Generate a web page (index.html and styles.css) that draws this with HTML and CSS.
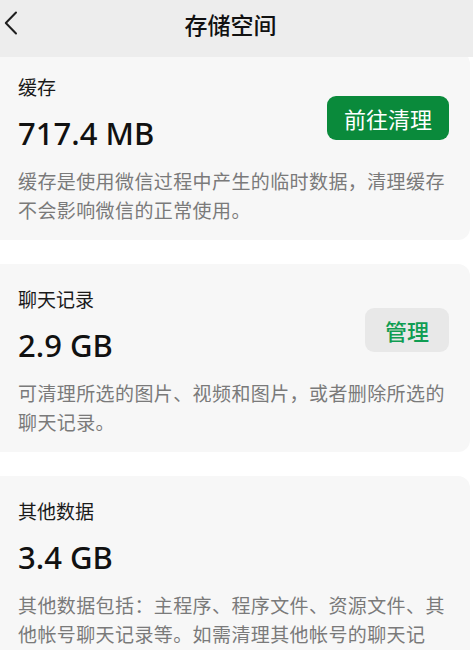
FILE: index.html
```html
<!DOCTYPE html>
<html lang="zh-CN">
<head>
    <meta charset="UTF-8">
    <meta name="viewport" content="width=device-width, initial-scale=1.0">
    <title>存储空间</title>
    <link rel="stylesheet" href="styles.css">
</head>
<body>
    <!-- Top Bar -->
    <div class="topbar">
        <a href="#" class="back" aria-label="返回">
            <svg width="14" height="24" viewBox="0 0 14 24">
                <polyline points="12,1.5 1.8,12 12,22.5" fill="none" stroke="#1f1f1f" stroke-width="2" stroke-linecap="round" stroke-linejoin="round"/>
            </svg>
        </a>
        <h1>存储空间</h1>
    </div>

    <div class="content">
        <!-- Cache -->
        <div class="card">
            <div class="card-top">
                <div class="info">
                    <div class="label">缓存</div>
                    <div class="amount">717.4 MB</div>
                </div>
                <button class="btn primary">前往清理</button>
            </div>
            <p class="desc">缓存是使用微信过程中产生的临时数据，清理缓存不会影响微信的正常使用。</p>
        </div>

        <!-- Chat history -->
        <div class="card">
            <div class="card-top">
                <div class="info">
                    <div class="label">聊天记录</div>
                    <div class="amount">2.9 GB</div>
                </div>
                <button class="btn light">管理</button>
            </div>
            <p class="desc">可清理所选的图片、视频和图片，或者删除所选的聊天记录。</p>
        </div>

        <!-- Other data -->
        <div class="card">
            <div class="card-top">
                <div class="info">
                    <div class="label">其他数据</div>
                    <div class="amount">3.4 GB</div>
                </div>
            </div>
            <p class="desc">其他数据包括：主程序、程序文件、资源文件、其他帐号聊天记录等。如需清理其他帐号的聊天记录，需登录该帐号后进行清理。</p>
        </div>
    </div>
</body>
</html>
```

FILE: styles.css
```css
/* General Styling */
body {
    margin: 0;
    padding: 0;
    font-family: "Noto Sans", "Noto Sans CJK SC", sans-serif;
    background: #ffffff;
    color: #111;
    overflow-x: hidden;
}

.topbar {
    position: relative;
    z-index: 2;
    height: 57px;
    background: #ededed;
    display: flex;
    align-items: center;
    justify-content: center;
}

.topbar h1 {
    margin: 0 12px 10px 0;
    font-size: 23px;
    font-weight: 500;
    color: #111;
}

.back {
    position: absolute;
    left: 4px;
    top: 11px;
    display: flex;
}

.content {
    display: flex;
    flex-direction: column;
    gap: 24px;
    margin-top: -5px;
}

.card {
    background: #f7f7f7;
    margin: 0 3px 0 -12px;
    padding: 23px 21px 14px 30px;
    border-radius: 12px;
}

.card-top {
    display: flex;
    align-items: center;
    justify-content: space-between;
}

.label {
    font-size: 19px;
    line-height: 26px;
    color: #1a1a1a;
}

.amount {
    margin-top: 12px;
    font-size: 31px;
    line-height: 40px;
    font-weight: 500;
    color: #111;
}

.btn {
    border: none;
    border-radius: 9px;
    font-family: inherit;
    font-size: 22px;
    height: 44px;
    margin-top: 8px;
    cursor: pointer;
}

.btn.primary {
    background: #0a8a3b;
    color: #ffffff;
    width: 122px;
}

.btn.light {
    background: #e8e8e8;
    color: #0f9d52;
    width: 84px;
    font-weight: 500;
}

.desc {
    margin: 15px 0 0 0;
    font-size: 19px;
    letter-spacing: 0.4px;
    line-height: 29px;
    color: #7a7a7a;
}
```
